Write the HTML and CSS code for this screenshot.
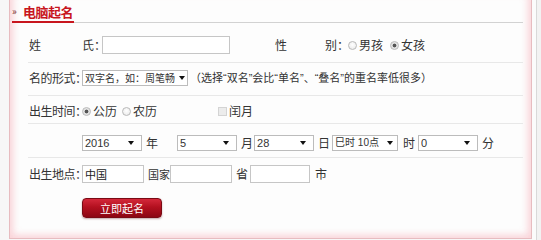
FILE: index.html
```html
<!DOCTYPE html>
<html lang="zh-CN">
<head>
<meta charset="utf-8">
<title>电脑起名</title>
<link rel="stylesheet" href="styles.css">
</head>
<body>
<div class="page">
  <div class="panel">
    <div class="head">
      <h2 class="title"><span class="raquo">»</span>电脑起名</h2>
    </div>
    <form class="form">
      <div class="row row1">
        <span class="lab-a">姓</span><span class="lab-b">氏：</span><input class="txt txt-name" type="text">
        <span class="lab-c">性</span><span class="lab-d">别：</span>
        <label class="opt"><input class="rad" type="radio" name="sex">男孩</label>
        <label class="opt opt-gap"><input class="rad" type="radio" name="sex" checked>女孩</label>
      </div>
      <div class="row row2">
        <span class="lab">名的形式：</span>
        <span class="sel sel-form"><select><option>双字名，如：周笔畅</option></select></span>
        <span class="note">（选择“双名”会比“单名”、“叠名”的重名率低很多）</span>
      </div>
      <div class="row row3">
        <span class="lab">出生时间：</span>
        <label class="opt"><input class="rad" type="radio" name="cal" checked>公历</label>
        <label class="opt opt-gap2"><input class="rad" type="radio" name="cal">农历</label>
        <label class="opt opt-leap"><input class="chk" type="checkbox">闰月</label>
      </div>
      <div class="row row4">
        <span class="indent"></span>
        <span class="sel sel-60"><select><option>2016</option></select></span><span class="unit u-year">年</span>
        <span class="sel sel-60"><select><option>5</option></select></span><span class="unit u-month">月</span>
        <span class="sel sel-60"><select><option>28</option></select></span><span class="unit u-day">日</span>
        <span class="sel sel-66"><select><option>巳时 10点</option></select></span><span class="unit u-hour">时</span>
        <span class="sel sel-60"><select><option>0</option></select></span><span class="unit">分</span>
      </div>
      <div class="row row5">
        <span class="lab">出生地点：</span>
        <input class="txt txt-62" type="text" value="中国"><span class="unit u-country">国家</span>
        <input class="txt txt-62" type="text"><span class="unit u-prov">省</span>
        <input class="txt txt-60" type="text"><span class="unit u-city">市</span>
      </div>
      <div class="btn-row">
        <button class="btn" type="button">立即起名</button>
      </div>
    </form>
  </div>
  <div class="side"></div>
</div>
</body>
</html>
```

FILE: styles.css
```css
* { box-sizing: border-box; }
html, body { margin: 0; padding: 0; }
body {
  font-family: "Liberation Sans", "Noto Sans CJK SC", sans-serif;
  font-size: 12px;
  color: #333;
  background: #f7f7f7;
}
.page {
  display: flex;
  height: 240px;
  overflow: hidden;
  background: #f7f7f7;
}
.panel {
  flex: none;
  width: 523px;
  height: 249px;
  margin: -10px 0 0 9px;
  border: 1px solid #e7bcc0;
  background: #fdfdfd;
  box-shadow: inset 0 0 7px 3px rgba(246, 160, 170, 0.45);
}
.side {
  flex: 1;
  background: linear-gradient(to right, #fbfbfb 0, #fbfbfb 4px, #d9d9d9 4px, #d9d9d9 5px, #f2f2f2 5px);
}
.head {
  display: flex;
  align-items: flex-end;
  margin: 0 8px 0 2px;
  border-bottom: 1px solid #d2d2d2;
}
.title {
  margin: 0 0 -1px 0;
  padding: 11px 1px 0 0;
  font-size: 13px;
  letter-spacing: -0.5px;
  font-weight: bold;
  line-height: 18px;
  color: #c8161e;
  border-bottom: 2px solid #c8161e;
  font-family: "Noto Sans CJK SC", sans-serif;
}
.raquo {
  display: inline-block;
  width: 11px;
  font-size: 10px;
  font-weight: normal;
  color: #7a2a2a;
  vertical-align: 2px;
}
.form {
  margin: 5px 8px 0 18px;
}
.row {
  display: flex;
  align-items: center;
  padding-left: 1px;
  border-bottom: 1px solid #e8e8e8;
  white-space: nowrap;
  line-height: 16px;
}
.row1 { height: 35px; }
.row2 { height: 33px; padding-bottom: 3px; }
.row3 { height: 28px; padding-top: 3px; }
.row4 { height: 34px; padding-top: 4px; }
.row5 { height: 31px; border-bottom: none; }

.lab, .lab-a, .lab-b, .lab-c, .lab-d, .unit, .opt, .note {
  font-family: "Noto Sans CJK SC", sans-serif;
}
.lab { flex: none; width: 53px; overflow: visible; letter-spacing: -0.5px; }
.lab-a { flex: none; width: 53px; }
.lab-b { flex: none; width: 20px; overflow: visible; }
.lab-c { flex: none; width: 50px; margin-left: 45px; }
.lab-d { flex: none; width: 23px; overflow: visible; }
.indent { flex: none; width: 53px; }

.txt {
  flex: none;
  height: 18px;
  margin: 0;
  padding: 0 2px;
  border: 1px solid #c6c6c6;
  background: #fff;
  font-family: "Noto Sans CJK SC", sans-serif;
  font-size: 11px;
  color: #222;
  outline: none;
}
.txt-name { width: 128px; }
.txt-62 { width: 62px; }
.txt-60 { width: 60px; margin-left: 2px; }

.opt {
  display: inline-flex;
  align-items: center;
  gap: 2px;
}
.opt-gap { margin-left: 7px; }
.opt-gap2 { margin-left: 5px; }
.opt-leap { margin-left: 61px; }
.rad {
  appearance: none;
  -webkit-appearance: none;
  width: 9px;
  height: 9px;
  margin: 0;
  border: 1px solid #b9b9b9;
  border-radius: 50%;
  background: radial-gradient(circle at 50% 40%, #ffffff 0, #e6e6e6 100%);
}
.rad:checked {
  background: radial-gradient(circle, #555 0, #555 1.6px, #dedede 2.2px, #f2f2f2 100%);
}
.chk {
  appearance: none;
  -webkit-appearance: none;
  width: 9px;
  height: 9px;
  margin: 0;
  border: 1px solid #d4d4d4;
  background: #ececec;
}

.sel {
  position: relative;
  display: inline-block;
  flex: none;
  height: 16px;
}
.sel select {
  appearance: none;
  -webkit-appearance: none;
  display: block;
  width: 100%;
  height: 16px;
  margin: 0;
  padding: 0 2px;
  border: 1px solid #bcbcbc;
  border-radius: 0;
  background: #fff;
  font-family: "Liberation Sans", "Noto Sans CJK SC", sans-serif;
  font-size: 11px;
  line-height: 14px;
  color: #333;
  outline: none;
}
.sel::after {
  content: "";
  position: absolute;
  right: 8px;
  top: 6px;
  border-left: 3px solid transparent;
  border-right: 3px solid transparent;
  border-top: 4px solid #111;
  pointer-events: none;
}
.sel-form { width: 106px; }
.sel-form select { font-size: 10px; font-family: "Noto Sans CJK SC", sans-serif; }
.sel-60 { width: 60px; }
.sel-66 { width: 66px; margin-left: 2px; }
.sel-66 select { font-size: 10px; }
.sel-66::after { right: 5px; }
.sel-form::after { right: 3px; }

.unit { flex: none; margin-left: 4px; }
.u-year { margin-right: 19px; }
.u-month { margin-right: 1px; }
.u-hour { margin-left: 5px; margin-right: 3px; }
.u-country { width: 22px; font-size: 11px; overflow: visible; }
.u-prov { margin-right: 0; }
.u-city { margin-left: 5px; }

.note {
  margin-left: 2px;
  font-size: 11px;
  font-family: "Liberation Sans", "Noto Sans CJK SC", sans-serif;
}

.btn-row {
  margin-top: 9px;
  padding-left: 54px;
}
.btn {
  display: block;
  width: 80px;
  height: 20px;
  margin: 0;
  padding: 0;
  border: 1px solid #7a0a14;
  border-radius: 4px;
  background: linear-gradient(to bottom, #d4283a 0, #b3101f 45%, #8c0613 100%);
  box-shadow: 0 1px 2px rgba(90, 0, 10, 0.35);
  color: #fff;
  font-family: "Noto Sans CJK SC", sans-serif;
  font-size: 11px;
  line-height: 18px;
  text-align: center;
}
```
